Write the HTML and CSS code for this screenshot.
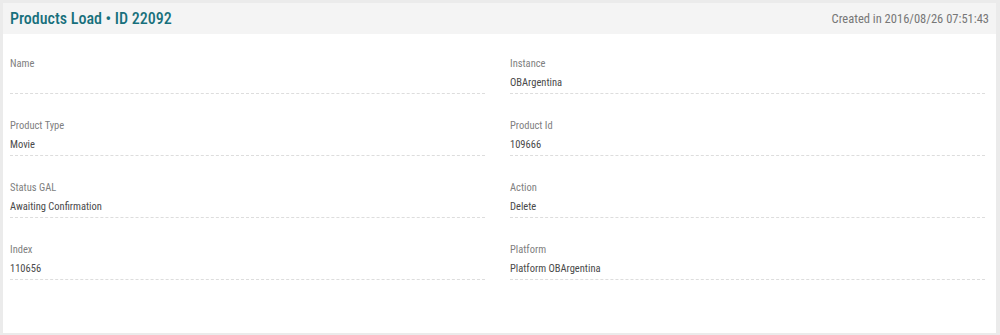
FILE: index.html
```html
<!DOCTYPE html>
<html lang="en">
<head>
    <meta charset="UTF-8">
    <meta name="viewport" content="width=device-width, initial-scale=1.0">
    <title>Products Load</title>
    <link rel="stylesheet" href="styles.css">
</head>
<body>

<div class="card">
    <div class="card-header">
        <h2>Products Load &bull; ID 22092</h2>
        <span class="created">Created in 2016/08/26 07:51:43</span>
    </div>

    <div class="fields">
        <div class="field">
            <label>Name</label>
            <div class="value"></div>
        </div>
        <div class="field">
            <label>Instance</label>
            <div class="value">OBArgentina</div>
        </div>
        <div class="field">
            <label>Product Type</label>
            <div class="value">Movie</div>
        </div>
        <div class="field">
            <label>Product Id</label>
            <div class="value">109666</div>
        </div>
        <div class="field">
            <label>Status GAL</label>
            <div class="value">Awaiting Confirmation</div>
        </div>
        <div class="field">
            <label>Action</label>
            <div class="value">Delete</div>
        </div>
        <div class="field">
            <label>Index</label>
            <div class="value">110656</div>
        </div>
        <div class="field">
            <label>Platform</label>
            <div class="value">Platform OBArgentina</div>
        </div>
    </div>
</div>

</body>
</html>
```

FILE: styles.css
```css
body {
    font-family: 'Roboto', 'Liberation Sans', sans-serif;
    font-stretch: 85%;
    background-color: #ebebeb;
    margin: 3px 4px 2px 3px;
    padding: 0;
}

.card {
    background: #fff;
    height: 330px;
    box-sizing: border-box;
}

.card-header {
    background: #f4f4f4;
    height: 31px;
    display: flex;
    justify-content: space-between;
    align-items: center;
    padding: 0 7px;
}

.card-header h2 {
    margin: 0;
    font-size: 16px;
    font-weight: 500;
    color: #17707c;
}

.created {
    font-size: 12.5px;
    color: #777;
}

.fields {
    display: grid;
    grid-template-columns: 1fr 1fr;
    column-gap: 25px;
    row-gap: 25px;
    padding: 23px 11px 0 7px;
}

.field {
    border-bottom: 1px dashed #ddd;
    padding-bottom: 3px;
}

label {
    display: block;
    font-size: 10.5px;
    line-height: 14px;
    color: #808080;
    margin-bottom: 5px;
}

.value {
    font-size: 10.5px;
    line-height: 14px;
    height: 14px;
    color: #4a4a4a;
}
```
